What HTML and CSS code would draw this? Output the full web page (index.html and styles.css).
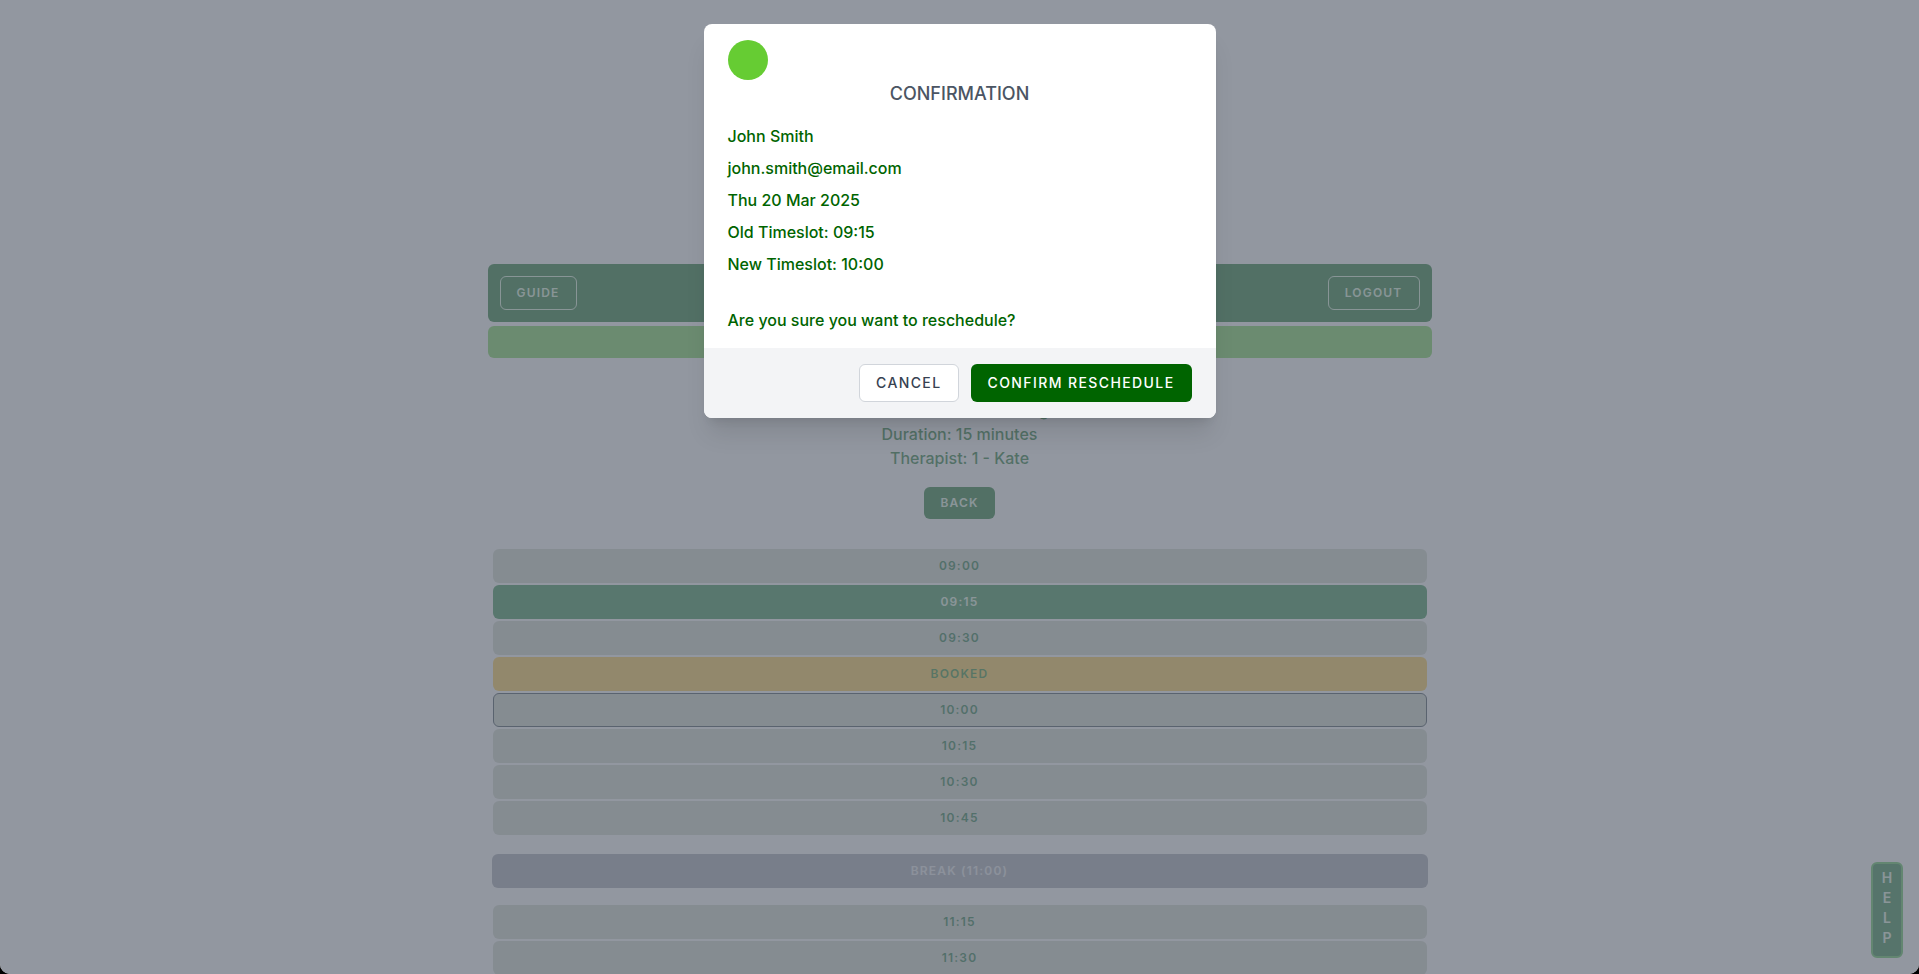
FILE: index.html
```html
<!DOCTYPE html>
<html lang="en">
<head>
    <meta charset="UTF-8">
    <meta name="viewport" content="width=device-width, initial-scale=1.0">
    <title>Reschedule Booking</title>
    <link rel="stylesheet" href="styles.css">
</head>
<body>
    <div class="app">
        <main class="page">
            <nav class="navbar">
                <button type="button" class="btn btn-outline">Guide</button>
                <button type="button" class="btn btn-outline">Logout</button>
            </nav>
            <div class="status-bar"></div>

            <div class="details">
                <p>Location: Main Building</p>
                <p>Duration: 15 minutes</p>
                <p>Therapist: 1 - Kate</p>
            </div>

            <div class="back">
                <button type="button" class="btn btn-back">Back</button>
            </div>

            <div class="slots">
                <button type="button" class="btn slot">09:00</button>
                <button type="button" class="btn slot current">09:15</button>
                <button type="button" class="btn slot">09:30</button>
                <button type="button" class="btn slot booked">Booked</button>
                <button type="button" class="btn slot selected">10:00</button>
                <button type="button" class="btn slot">10:15</button>
                <button type="button" class="btn slot">10:30</button>
                <button type="button" class="btn slot">10:45</button>
                <button type="button" class="btn slot break">Break (11:00)</button>
                <button type="button" class="btn slot">11:15</button>
                <button type="button" class="btn slot">11:30</button>
            </div>
        </main>

        <button type="button" class="help">H<br>E<br>L<br>P</button>

        <div class="overlay">
            <div class="modal" role="dialog" aria-modal="true" aria-labelledby="modalTitle">
                <div class="modal-body">
                    <div class="modal-icon"></div>
                    <h2 id="modalTitle">CONFIRMATION</h2>
                    <div class="modal-text">
                        <p>John Smith</p>
                        <p>john.smith@email.com</p>
                        <p>Thu 20 Mar 2025</p>
                        <p>Old Timeslot: 09:15</p>
                        <p>New Timeslot: 10:00</p>
                        <p class="question">Are you sure you want to reschedule?</p>
                    </div>
                </div>
                <div class="modal-footer">
                    <button type="button" class="btn btn-cancel">Cancel</button>
                    <button type="button" class="btn btn-confirm">Confirm Reschedule</button>
                </div>
            </div>
        </div>
    </div>
</body>
</html>
```
FILE: styles.css
```css
* {
    box-sizing: border-box;
}

html {
    background: #000;
}

body {
    margin: 0;
    font-family: Inter, Roboto, sans-serif;
    font-size: 16px;
    line-height: 24px;
}

p, h2 {
    margin: 0;
}

.app {
    position: relative;
    height: 100vh;
    overflow: hidden;
    background: #fff;
    border-radius: 0 0 10px 10px;
}

.page {
    max-width: 944px;
    margin: 0 auto;
    padding-top: 264px;
}

/* Buttons */
.btn {
    font-family: inherit;
    font-size: 12px;
    line-height: 16px;
    font-weight: 600;
    letter-spacing: 0.1em;
    text-transform: uppercase;
    padding: 8px 16px;
    border: 1px solid transparent;
    border-radius: 6px;
    cursor: pointer;
}

.navbar {
    display: flex;
    justify-content: space-between;
    padding: 12px;
    background: #006414;
    border-radius: 6px;
}

.btn-outline {
    background: transparent;
    color: #d8f5d8;
    border-color: #d8f5d8;
}

.status-bar {
    height: 32px;
    margin-top: 4px;
    background: #66d040;
    border-radius: 6px;
}

.details {
    margin-top: 40px;
    text-align: center;
    font-weight: 500;
    color: #006414;
}

.back {
    display: flex;
    justify-content: center;
    margin: 17px 0 30px;
}

.btn-back {
    border: none;
    background: #006414;
    color: #e0f5e0;
}

/* Time slots */
.slots {
    display: grid;
    gap: 2px;
    padding: 0 5px;
}

.slot {
    background: #ccd2c4;
    color: #006428;
}

.slot.current {
    background: #188038;
    color: #e0f5e0;
}

.slot.booked {
    background: #ffc433;
    color: #147814;
}

.slot.selected {
    border-color: #20303c;
}

.slot.break {
    margin: 17px -1px 15px;
    background: #989ca8;
    color: #e5e7eb;
}

.help {
    position: absolute;
    right: 16px;
    bottom: 16px;
    width: 32px;
    padding: 4px 0 8px;
    font-family: inherit;
    font-size: 14px;
    line-height: 20px;
    font-weight: 600;
    color: #e0f5e0;
    background: #10742c;
    border: 2px solid #44bb44;
    border-radius: 6px;
    cursor: pointer;
}

/* Modal */
.overlay {
    position: absolute;
    inset: 0;
    padding: 24px;
    background: rgba(110, 116, 128, 0.75);
}

.modal {
    max-width: 512px;
    margin: 0 auto;
    overflow: hidden;
    background: #fff;
    border-radius: 8px;
    box-shadow: 0 20px 25px -5px rgba(0, 0, 0, 0.1), 0 8px 10px -6px rgba(0, 0, 0, 0.1);
}

.modal-body {
    padding: 16px 24px;
}

.modal-icon {
    width: 40px;
    height: 40px;
    background: #66cc33;
    border-radius: 50%;
}

.modal h2 {
    font-size: 18px;
    line-height: 28px;
    font-weight: 500;
    text-align: center;
    color: #4b5563;
}

.modal-text {
    display: grid;
    gap: 8px;
    margin-top: 16px;
    font-weight: 500;
    color: #006400;
}

.question {
    margin-top: 24px;
}

.modal-footer {
    display: flex;
    justify-content: flex-end;
    gap: 12px;
    padding: 16px 24px;
    background: #f3f4f6;
}

.modal-footer .btn {
    font-size: 14px;
    line-height: 20px;
    font-weight: 500;
}

.btn-cancel {
    background: #fff;
    color: #374151;
    border-color: #d1d5db;
}

.btn-confirm {
    background: #006400;
    color: #fff;
}
```
